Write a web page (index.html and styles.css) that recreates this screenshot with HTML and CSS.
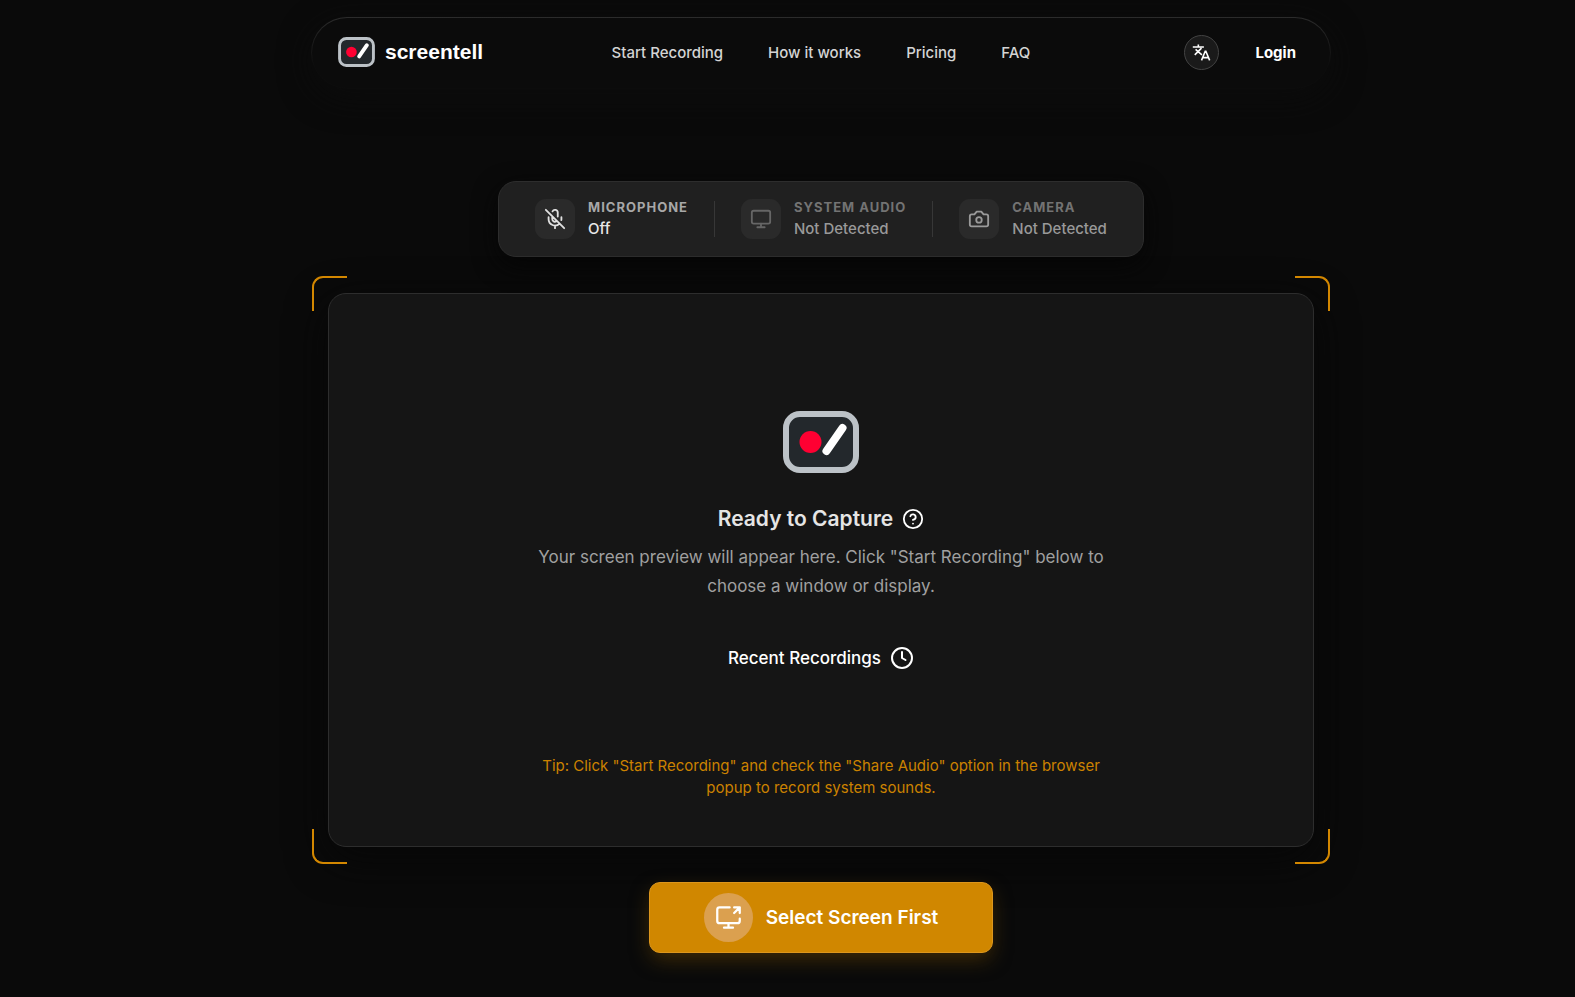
FILE: index.html
```html
<!DOCTYPE html>
<html lang="en">
<head>
<meta charset="utf-8">
<title>screentell</title>
<link rel="stylesheet" href="styles.css">
</head>
<body>
<svg class="defs" aria-hidden="true">
  <symbol id="logo" viewBox="0 0 76 62">
    <rect x="3" y="3" width="70" height="56" rx="14" fill="#23282c" stroke="#bcc2c7" stroke-width="6"/>
    <circle cx="27.500" cy="31" r="11" fill="#ff0032"/>
    <path d="M43.500 40 59.500 17" stroke="#fff" stroke-width="8" stroke-linecap="round"/>
  </symbol>
</svg>
<div class="page">
  <header class="header">
    <a class="brand" href="#"><svg class="brand-logo" aria-hidden="true"><use href="#logo"/></svg><span>screentell</span></a>
    <nav class="nav">
      <a href="#record">Start Recording</a>
      <a href="#how">How it works</a>
      <a href="#pricing">Pricing</a>
      <a href="#faq">FAQ</a>
    </nav>
    <div class="account">
      <button class="language" type="button" aria-label="Change language">
        <svg viewBox="0 0 24 24" width="19" height="19" aria-hidden="true" fill="none" stroke="currentColor" stroke-width="2"><path d="M1 5h14M8 2v3M3.500 15 12 6.500M4.500 8l8 7M12 22l4.700-11.500h.8L22.300 22M14 18.500h6.600"/></svg>
      </button>
      <a class="login" href="#login">Login</a>
    </div>
  </header>

  <main class="main">
    <section class="devices">
      <button class="device" type="button">
        <span class="device-icon"><svg class="icon" viewBox="0 0 24 24" aria-hidden="true"><path d="m2 2 20 20M18.890 13.230A7.120 7.120 0 0 0 19 12v-2M5 10v2a7 7 0 0 0 12 5M15 9.340V5a3 3 0 0 0-5.680-1.330M9 9v3a3 3 0 0 0 5.120 2.120M12 19v3"/></svg></span>
        <span class="device-text"><span class="device-name">MICROPHONE</span><span class="device-state">Off</span></span>
      </button>
      <span class="divider"></span>
      <button class="device device-missing" type="button">
        <span class="device-icon device-icon-dim"><svg class="icon" viewBox="0 0 24 24" aria-hidden="true"><rect x="2" y="3" width="20" height="14" rx="2"/><path d="M8 21h8M12 17v4"/></svg></span>
        <span class="device-text"><span class="device-name">SYSTEM AUDIO</span><span class="device-state">Not Detected</span></span>
      </button>
      <span class="divider"></span>
      <button class="device device-missing" type="button">
        <span class="device-icon"><svg class="icon" viewBox="0 0 24 24" aria-hidden="true"><path d="M14.500 4h-5L7 7H4a2 2 0 0 0-2 2v9a2 2 0 0 0 2 2h16a2 2 0 0 0 2-2V9a2 2 0 0 0-2-2h-3z"/><circle cx="12" cy="13" r="3"/></svg></span>
        <span class="device-text"><span class="device-name">CAMERA</span><span class="device-state">Not Detected</span></span>
      </button>
    </section>

    <section class="frame">
      <i class="corner top-left"></i><i class="corner top-right"></i><i class="corner bottom-left"></i><i class="corner bottom-right"></i>
      <div class="preview">
        <svg class="preview-logo" aria-hidden="true"><use href="#logo"/></svg>
        <div class="title-row">
          <h1>Ready to Capture</h1>
          <button class="help" type="button" aria-label="Help"><svg class="icon" viewBox="0 0 24 24" aria-hidden="true"><circle cx="12" cy="12" r="10"/><path d="M9.090 9a3 3 0 0 1 5.830 1c0 2-3 3-3 3M12 17h.01"/></svg></button>
        </div>
        <p class="intro">Your screen preview will appear here. Click "Start Recording" below to choose a window or display.</p>
        <button class="recent" type="button">Recent Recordings <svg class="icon" viewBox="0 0 24 24" aria-hidden="true"><circle cx="12" cy="12" r="10"/><path d="M12 6v6l3.500 2"/></svg></button>
        <p class="tip">Tip: Click "Start Recording" and check the "Share Audio" option in the browser popup to record system sounds.</p>
      </div>
    </section>

    <button class="select" type="button">
      <span class="select-icon"><svg class="icon" viewBox="0 0 24 24" aria-hidden="true"><path d="M13 3H4a2 2 0 0 0-2 2v10a2 2 0 0 0 2 2h16a2 2 0 0 0 2-2v-2M8 21h8M12 17v4M17 8l5-5M17 3h5v5"/></svg></span>
      <span>Select Screen First</span>
    </button>
  </main>
</div>
</body>
</html>
```
FILE: styles.css
```css
* { box-sizing: border-box; }
body {
  margin: 0;
  background: #0a0a0a;
  color: #fff;
  font-family: Inter, "Liberation Sans", sans-serif;
  font-size: 16px;
}
button {
  padding: 0;
  border: 0;
  background: none;
  color: inherit;
  font: inherit;
  cursor: pointer;
}
a { color: inherit; text-decoration: none; }
h1, p { margin: 0; }
.defs { position: absolute; width: 0; height: 0; }
.icon {
  display: block;
  fill: none;
  stroke: currentColor;
  stroke-width: 2;
  stroke-linecap: round;
  stroke-linejoin: round;
}
.page {
  display: flex;
  flex-direction: column;
  align-items: center;
  padding: 17px 0 42px 67px;
}
.header {
  display: grid;
  grid-template-columns: 1fr auto 1fr;
  align-items: center;
  width: 100%;
  max-width: 1020px;
  height: 72px;
  padding: 0 26px 2px;
  border: 1px solid transparent;
  border-radius: 36px;
  background: linear-gradient(#0b0b0b, #0b0b0b) padding-box, linear-gradient(#2c2c2c, #0c0c0c 70%) border-box;
  box-shadow: 0 8px 32px #0c0c0c;
}
.brand {
  display: flex;
  align-items: center;
  gap: 10px;
  font: bold 21px/24px "Liberation Sans", sans-serif;
}
.brand-logo { width: 37px; height: 30px; }
.nav {
  display: flex;
  gap: 45px;
  color: #d4d4d4;
  font-weight: 500;
  font-size: 15px;
}
.account {
  display: flex;
  align-items: center;
  justify-content: flex-end;
  gap: 36px;
  padding-right: 8px;
}
.language {
  display: grid;
  place-items: center;
  width: 35px;
  height: 35px;
  border: 1px solid #434343;
  border-radius: 50%;
  background: #1a1a1a;
}
.login { font-weight: 700; font-size: 15px; }
.main {
  display: flex;
  flex-direction: column;
  align-items: center;
  width: 100%;
  max-width: 1018px;
  padding-top: 92px;
}
.devices {
  display: flex;
  align-items: center;
  gap: 26px;
  height: 76px;
  padding: 0 36px;
  border: 1px solid #2d2d2d;
  border-radius: 18px;
  background: #202020;
  box-shadow: 0 8px 24px #060606;
}
.device {
  display: flex;
  align-items: center;
  gap: 13px;
  text-align: left;
}
.device-icon {
  display: grid;
  place-items: center;
  width: 40px;
  height: 40px;
  border-radius: 11px;
  background: #2a2a2a;
  color: #e0e0e0;
}
.device-icon .icon { width: 22px; height: 22px; }
.device-text { display: flex; flex-direction: column; gap: 2px; }
.device-name {
  color: #a8a8a8;
  font-weight: 700;
  font-size: 13px;
  line-height: 18px;
  letter-spacing: 1px;
}
.device-state {
  color: #e8e8e8;
  font-weight: 500;
  font-size: 15px;
  line-height: 22px;
}
.device-missing .device-icon { color: #9a9a9a; }
.device-missing .device-icon-dim { color: #666; }
.device-missing .device-name { color: #737373; }
.device-missing .device-state { color: #999; }
.divider { width: 1px; height: 36px; background: #373737; }
.frame {
  position: relative;
  width: 100%;
  margin-top: 19px;
  padding: 17px 16px;
}
.corner {
  position: absolute;
  width: 35px;
  height: 35px;
  border: 0 solid #d38700;
}
.top-left { top: 0; left: 0; border-width: 2px 0 0 2px; border-top-left-radius: 11px; }
.top-right { top: 0; right: 0; border-width: 2px 2px 0 0; border-top-right-radius: 11px; }
.bottom-left { bottom: 0; left: 0; border-width: 0 0 2px 2px; border-bottom-left-radius: 11px; }
.bottom-right { bottom: 0; right: 0; border-width: 0 2px 2px 0; border-bottom-right-radius: 11px; }
.preview {
  display: flex;
  flex-direction: column;
  align-items: center;
  padding: 117px 32px 47px;
  border: 1px solid #2d2d2d;
  border-radius: 18px;
  background: #151515;
  box-shadow: 0 12px 40px #070707;
  text-align: center;
}
.preview-logo { width: 76px; height: 62px; }
.title-row {
  display: flex;
  align-items: center;
  gap: 9px;
  margin-top: 31px;
}
h1 {
  color: #e5e5e5;
  font-weight: 600;
  font-size: 21px;
  line-height: 30px;
}
.help .icon { width: 22px; height: 22px; }
.intro {
  max-width: 570px;
  margin-top: 9px;
  color: #a0a0a0;
  font-size: 17px;
  line-height: 29px;
}
.recent {
  display: flex;
  align-items: center;
  gap: 9px;
  margin-top: 44px;
  font-weight: 500;
  font-size: 17px;
  line-height: 26px;
}
.recent .icon { width: 24px; height: 24px; }
.tip {
  max-width: 576px;
  margin-top: 84px;
  color: #cb8200;
  font-size: 15px;
  line-height: 22px;
}
.select {
  display: flex;
  position: relative;
  align-items: center;
  gap: 13px;
  height: 71px;
  margin-top: 18px;
  padding: 0 54px;
  border: 1px solid #dc961d;
  border-radius: 11px;
  background: #d08700;
  box-shadow: 0 8px 20px -2px #3f2b06;
  font-weight: 600;
  font-size: 19px;
}
.select-icon {
  display: grid;
  place-items: center;
  width: 49px;
  height: 49px;
  border-radius: 50%;
  background: #dba04f;
}
.select-icon .icon { width: 27px; height: 27px; }
```
